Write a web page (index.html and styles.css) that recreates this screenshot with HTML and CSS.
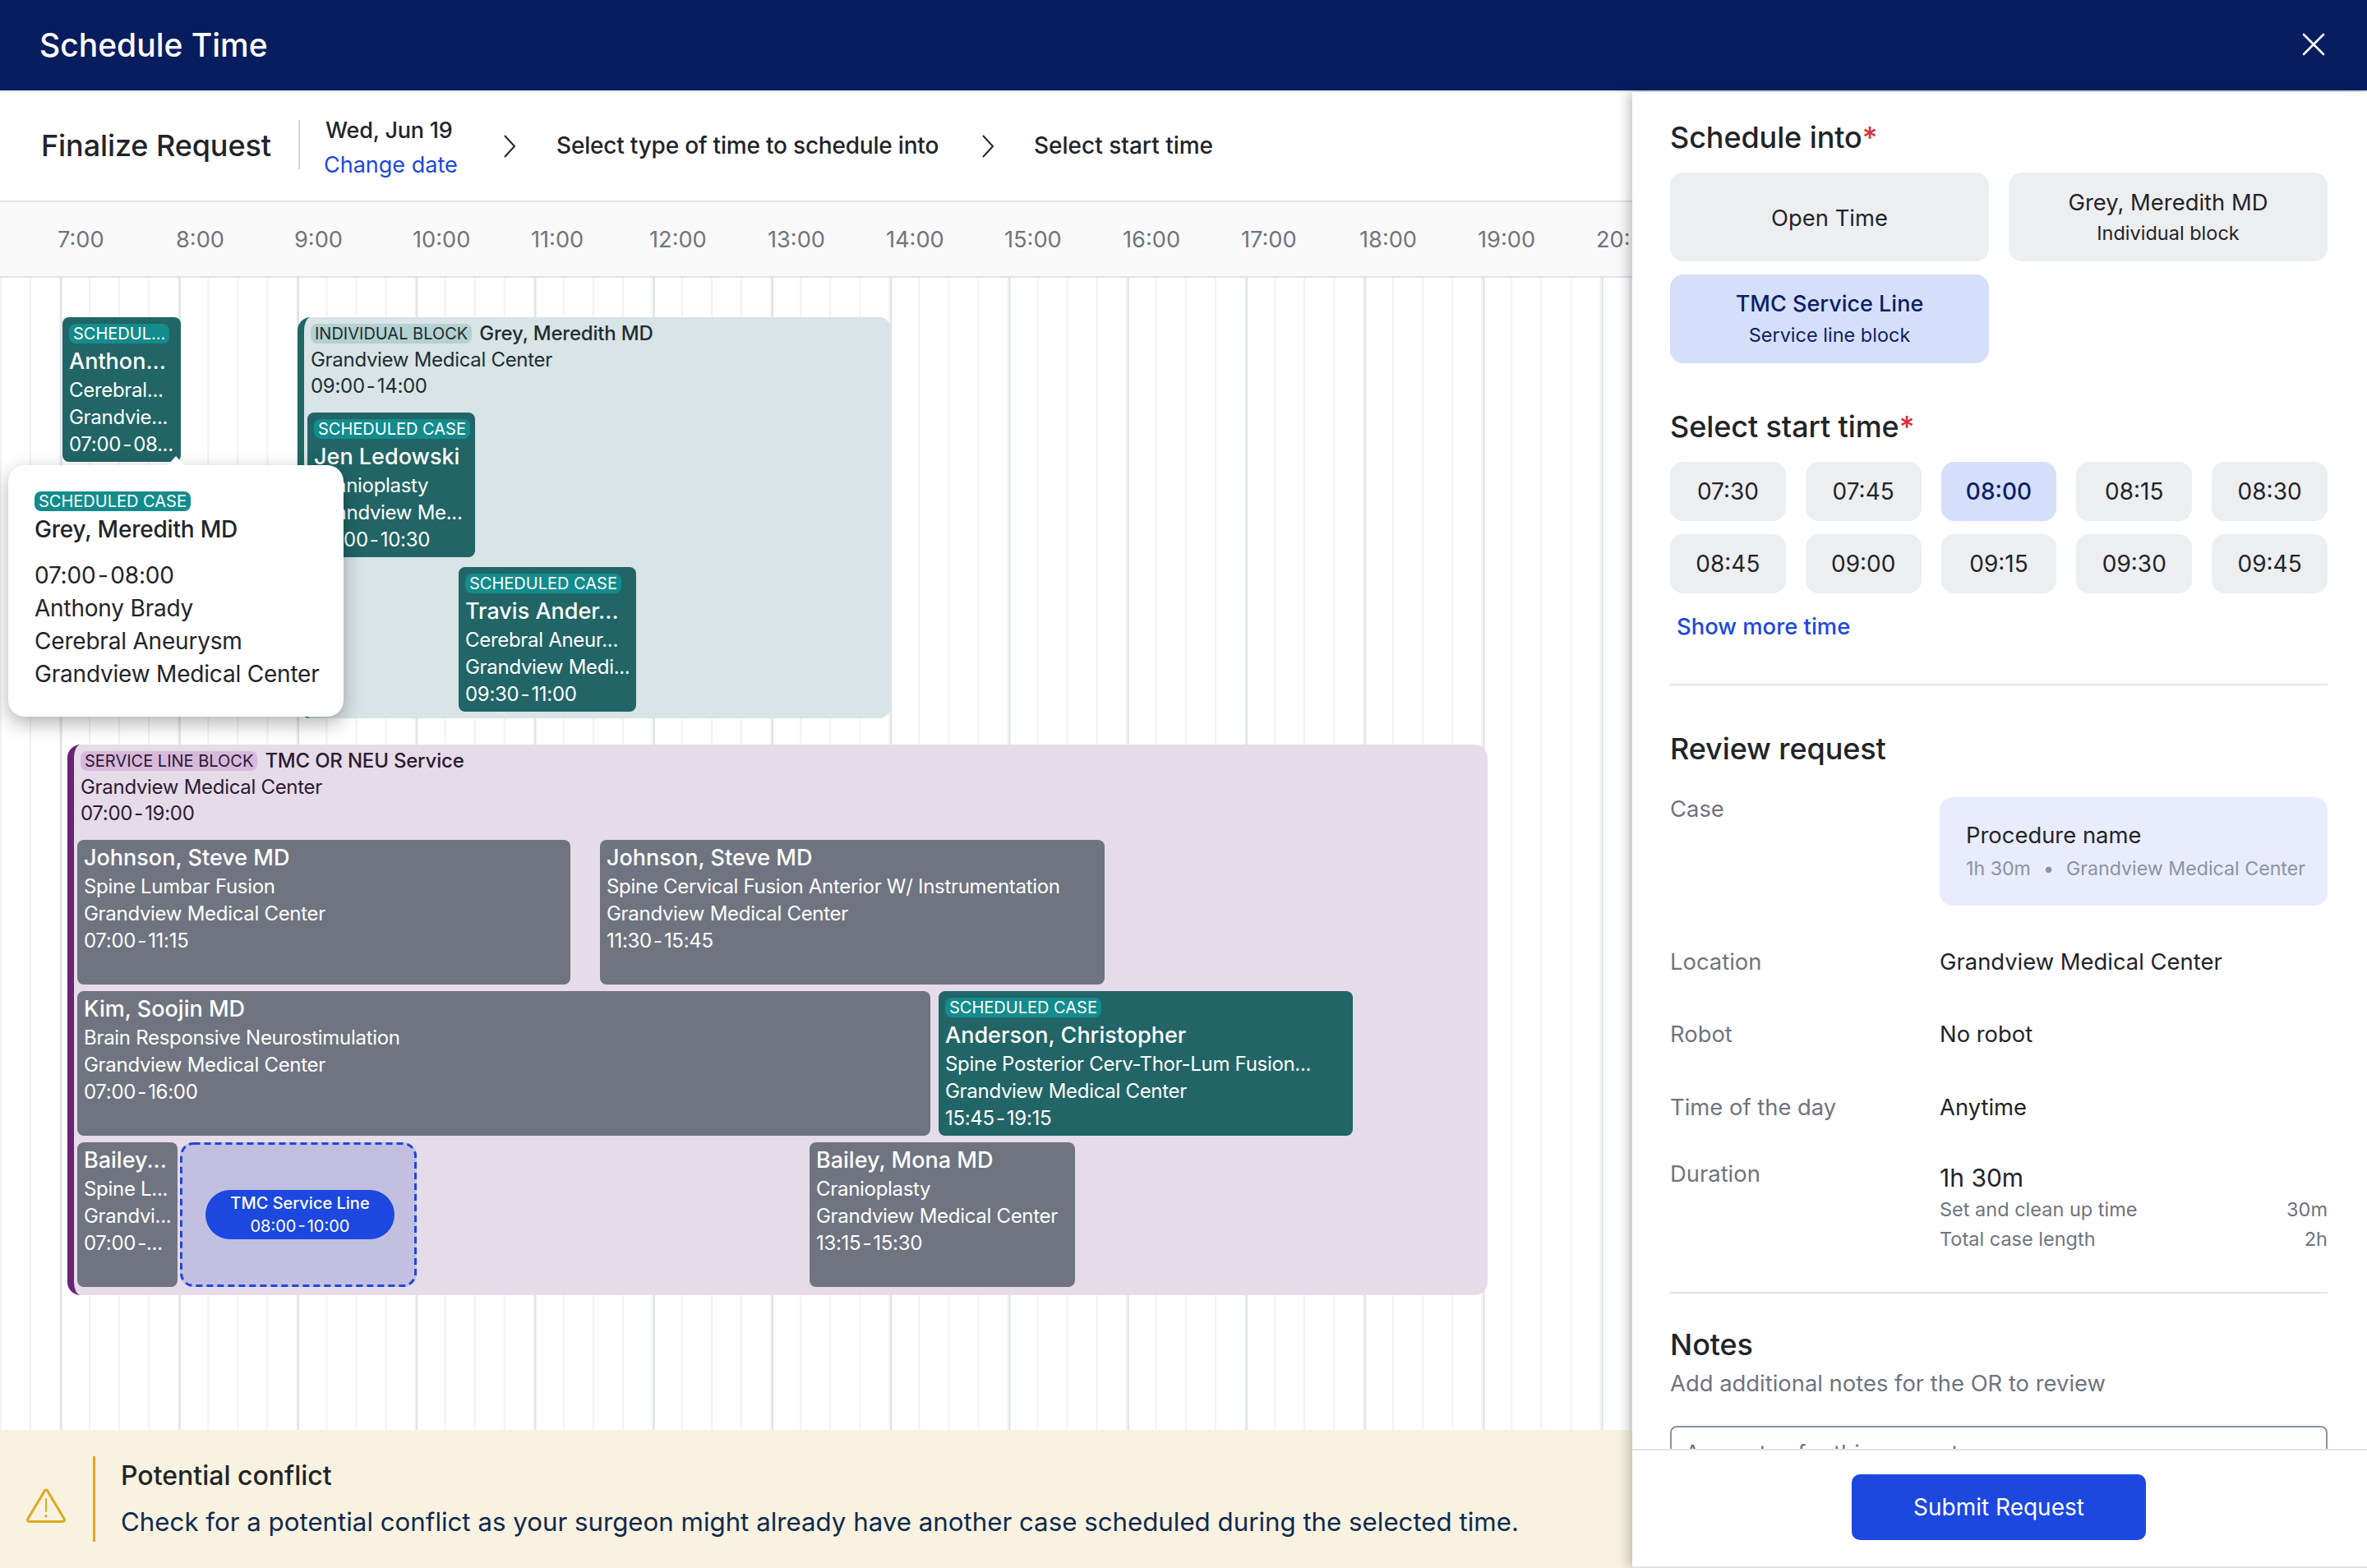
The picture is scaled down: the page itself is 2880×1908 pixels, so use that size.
FILE: index.html
```html
<!DOCTYPE html>
<html lang="en">
<head>
    <meta charset="UTF-8">
    <meta name="viewport" content="width=device-width, initial-scale=1.0">
    <title>Schedule Time</title>
    <link rel="stylesheet" href="styles.css">
</head>
<body>
    <header class="topbar">
        <h1>Schedule Time</h1>
        <svg class="close-icon" viewBox="0 0 28 28" fill="none" stroke="#fff" stroke-width="2.6" stroke-linecap="round">
            <path d="M2 2 L26 26 M26 2 L2 26"/>
        </svg>
    </header>

    <div class="main">
        <section class="board">
            <div class="steps">
                <div class="steps-title">Finalize Request</div>
                <div class="step-date">
                    <div>Wed, Jun 19</div>
                    <a class="link">Change date</a>
                </div>
                <svg class="chevron chevron-first" viewBox="0 0 16 28" fill="none" stroke="#22242a" stroke-width="2">
                    <path d="M2 1 L14 14 L2 27"/>
                </svg>
                <div class="step-label step-label-long">Select type of time to schedule into</div>
                <svg class="chevron chevron-second" viewBox="0 0 16 28" fill="none" stroke="#22242a" stroke-width="2">
                    <path d="M2 1 L14 14 L2 27"/>
                </svg>
                <div class="step-label">Select start time</div>
            </div>

            <div class="hours">
                <span>7:00</span><span>8:00</span><span>9:00</span><span>10:00</span><span>11:00</span>
                <span>12:00</span><span>13:00</span><span>14:00</span><span>15:00</span><span>16:00</span>
                <span>17:00</span><span>18:00</span><span>19:00</span><span>20:</span>
            </div>

            <div class="timeline">
                <!-- scheduled case outside any block -->
                <div class="card card-case card-anthony">
                    <span class="tag tag-case">Schedul...</span>
                    <div class="card-name">Anthon...</div>
                    <div class="card-line">Cerebral...</div>
                    <div class="card-line">Grandvie...</div>
                    <div class="card-line range">07:00 - 08...</div>
                </div>

                <!-- individual block -->
                <div class="block block-individual">
                    <div class="block-head">
                        <span class="tag tag-individual">Individual block</span>
                        <span class="block-name">Grey, Meredith MD</span>
                    </div>
                    <div class="block-line">Grandview Medical Center</div>
                    <div class="block-line range">09:00 - 14:00</div>
                    <div class="block-rows block-rows-tight">
                        <div class="card-row">
                            <div class="card card-case w-jen">
                                <span class="tag tag-case">Scheduled case</span>
                                <div class="card-name">Jen Ledowski</div>
                                <div class="card-line">Cranioplasty</div>
                                <div class="card-line">Grandview Me...</div>
                                <div class="card-line range">09:00 - 10:30</div>
                            </div>
                        </div>
                        <div class="card-row">
                            <div class="card card-case w-travis">
                                <span class="tag tag-case">Scheduled case</span>
                                <div class="card-name">Travis Ander...</div>
                                <div class="card-line">Cerebral Aneur...</div>
                                <div class="card-line">Grandview Medi...</div>
                                <div class="card-line range">09:30 - 11:00</div>
                            </div>
                        </div>
                    </div>
                </div>

                <!-- service line block -->
                <div class="block block-service">
                    <div class="block-head">
                        <span class="tag tag-service">Service line block</span>
                        <span class="block-name">TMC OR NEU Service</span>
                    </div>
                    <div class="block-line">Grandview Medical Center</div>
                    <div class="block-line range">07:00 - 19:00</div>
                    <div class="block-rows">
                        <div class="card-row">
                            <div class="card card-grey w-johnson1">
                                <div class="card-name">Johnson, Steve MD</div>
                                <div class="card-line">Spine Lumbar Fusion</div>
                                <div class="card-line">Grandview Medical Center</div>
                                <div class="card-line range">07:00 - 11:15</div>
                            </div>
                            <div class="card card-grey w-johnson2">
                                <div class="card-name">Johnson, Steve MD</div>
                                <div class="card-line">Spine Cervical Fusion Anterior W/ Instrumentation</div>
                                <div class="card-line">Grandview Medical Center</div>
                                <div class="card-line range">11:30 - 15:45</div>
                            </div>
                        </div>
                        <div class="card-row">
                            <div class="card card-grey w-kim">
                                <div class="card-name">Kim, Soojin MD</div>
                                <div class="card-line">Brain Responsive Neurostimulation</div>
                                <div class="card-line">Grandview Medical Center</div>
                                <div class="card-line range">07:00 - 16:00</div>
                            </div>
                            <div class="card card-case w-anderson">
                                <span class="tag tag-case">Scheduled case</span>
                                <div class="card-name">Anderson, Christopher</div>
                                <div class="card-line">Spine Posterior Cerv-Thor-Lum Fusion...</div>
                                <div class="card-line">Grandview Medical Center</div>
                                <div class="card-line range">15:45 - 19:15</div>
                            </div>
                        </div>
                        <div class="card-row">
                            <div class="card card-grey w-bailey1">
                                <div class="card-name">Bailey...</div>
                                <div class="card-line">Spine L...</div>
                                <div class="card-line">Grandvi...</div>
                                <div class="card-line range">07:00 -...</div>
                            </div>
                            <div class="drop-slot">
                                <svg class="drop-outline" fill="none" stroke="#1c48df" stroke-width="3" stroke-dasharray="8 5">
                                    <rect x="1.500" y="1.500" width="285" height="173" rx="15"/>
                                </svg>
                                <div class="drop-pill">
                                    <strong>TMC Service Line</strong>
                                    <span class="range">08:00 - 10:00</span>
                                </div>
                            </div>
                            <div class="card card-grey w-bailey2">
                                <div class="card-name">Bailey, Mona MD</div>
                                <div class="card-line">Cranioplasty</div>
                                <div class="card-line">Grandview Medical Center</div>
                                <div class="card-line range">13:15 - 15:30</div>
                            </div>
                        </div>
                    </div>
                </div>

                <!-- hover popup for the 07:00 case -->
                <div class="popup">
                    <span class="tag tag-case">Scheduled case</span>
                    <div class="popup-name">Grey, Meredith MD</div>
                    <div class="range">07:00 - 08:00</div>
                    <div>Anthony Brady</div>
                    <div>Cerebral Aneurysm</div>
                    <div>Grandview Medical Center</div>
                </div>
            </div>

            <div class="conflict">
                <svg class="conflict-icon" viewBox="0 0 48 42" fill="none" stroke="#dea71d" stroke-width="3" stroke-linejoin="round" stroke-linecap="round">
                    <path d="M24 2 C25 2 26 3 26.500 4.500 L46 37 C47 39 46 40.500 44 40.500 L4 40.500 C2 40.500 1 39 2 37 L21.500 4.500 C22 3 23 2 24 2 Z"/>
                    <path d="M24 13 L24 28" stroke-width="2"/>
                    <path d="M24 33.500 L24 34"/>
                </svg>
                <div class="conflict-text">
                    <div class="conflict-title">Potential conflict</div>
                    <div class="conflict-body">Check for a potential conflict as your surgeon might already have another case scheduled during the selected time.</div>
                </div>
            </div>
        </section>

        <aside class="panel">
            <div class="panel-body">
                <h2 class="first-heading">Schedule into<span class="req">*</span></h2>
                <div class="choice-grid">
                    <div class="choice"><div class="choice-main">Open Time</div></div>
                    <div class="choice">
                        <div class="choice-main">Grey, Meredith MD</div>
                        <div class="choice-sub">Individual block</div>
                    </div>
                    <div class="choice selected">
                        <div class="choice-main">TMC Service Line</div>
                        <div class="choice-sub">Service line block</div>
                    </div>
                </div>

                <h2 class="start-heading">Select start time<span class="req">*</span></h2>
                <div class="time-grid">
                    <div class="time">07:30</div>
                    <div class="time">07:45</div>
                    <div class="time selected">08:00</div>
                    <div class="time">08:15</div>
                    <div class="time">08:30</div>
                    <div class="time">08:45</div>
                    <div class="time">09:00</div>
                    <div class="time">09:15</div>
                    <div class="time">09:30</div>
                    <div class="time">09:45</div>
                </div>
                <a class="link show-more">Show more time</a>
                <hr class="rule rule-review">

                <h2 class="review-heading">Review request</h2>
                <div class="review-row row-case">
                    <div class="review-label label-top">Case</div>
                    <div class="case-box">
                        <div class="case-name">Procedure name</div>
                        <div class="case-meta"><span>1h 30m</span><span class="dot">•</span><span>Grandview Medical Center</span></div>
                    </div>
                </div>
                <div class="review-row row-location">
                    <div class="review-label">Location</div>
                    <div>Grandview Medical Center</div>
                </div>
                <div class="review-row row-robot">
                    <div class="review-label">Robot</div>
                    <div>No robot</div>
                </div>
                <div class="review-row row-time">
                    <div class="review-label">Time of the day</div>
                    <div>Anytime</div>
                </div>
                <div class="review-row row-duration">
                    <div class="review-label">Duration</div>
                    <div>
                        <div class="duration-value">1h 30m</div>
                        <div class="duration-line"><span>Set and clean up time</span><span>30m</span></div>
                        <div class="duration-line"><span>Total case length</span><span>2h</span></div>
                    </div>
                </div>
                <hr class="rule rule-notes">

                <h2 class="notes-heading">Notes</h2>
                <div class="notes-hint">Add additional notes for the OR to review</div>
                <div class="notes-input">Any notes for this request</div>
            </div>
            <div class="panel-footer">
                <button class="submit">Submit Request</button>
            </div>
        </aside>
    </div>
</body>
</html>
```

FILE: styles.css
```css
* {
    box-sizing: border-box;
}

html, body {
    margin: 0;
    padding: 0;
    height: 100%;
    overflow: hidden;
}

body {
    display: flex;
    flex-direction: column;
    font-family: Inter, "Liberation Sans", sans-serif;
    font-size: 28px;
    color: #22242a;
    background: #fff;
}

h1, h2 {
    margin: 0;
    font-weight: 500;
}

.link {
    color: #1c48df;
}

/* the reference sets time ranges with almost no space round the dash */
.range {
    word-spacing: -0.18em;
}

/* top bar */
.topbar {
    flex: none;
    height: 112px;
    display: flex;
    align-items: center;
    justify-content: space-between;
    padding: 0 51px 2px 48px;
    background: #071d5f;
    border-bottom: 2px solid #e5e7eb;
}

.topbar h1 {
    font-size: 39px;
    color: #fff;
}

.close-icon {
    width: 28px;
    height: 28px;
}

.main {
    flex: 1;
    min-height: 0;
    display: flex;
}

/* left side */
.board {
    flex: 1;
    min-width: 0;
    display: flex;
    flex-direction: column;
    overflow: hidden;
}

.steps {
    flex: none;
    height: 134px;
    display: flex;
    align-items: center;
    padding-left: 50px;
    border-bottom: 2px solid #e2e3e5;
}

.steps-title {
    width: 313px;
    font-size: 36px;
    font-weight: 500;
    letter-spacing: -0.1px;
    margin-top: -2px;
}

.step-date {
    flex: none;
    width: 198px;
    height: 60px;
    padding-left: 31px;
    border-left: 2px solid #d5d7da;
    font-size: 27px;
    font-weight: 500;
    line-height: 42px;
    letter-spacing: -0.2px;
    margin-top: -4px;
}

.step-date > div {
    margin-top: -8px;
}

.step-date .link {
    display: block;
    margin-left: -2px;
    font-weight: 400;
    letter-spacing: 0;
}

.chevron {
    flex: none;
    width: 16px;
    height: 28px;
}

.chevron-first {
    margin: 0 49px 0 51px;
}

.chevron-second {
    margin: 0 48px 0 0;
}

.step-label {
    font-weight: 500;
    margin-top: -2px;
}

.step-label-long {
    flex: none;
    width: 517px;
    letter-spacing: -0.2px;
}

.hours {
    flex: none;
    height: 92px;
    display: flex;
    align-items: center;
    padding-left: 70px;
    background: #f9f9f9;
    border-bottom: 2px solid #e2e3e5;
    color: #6f7480;
    font-size: 27.2px;
}

.hours span {
    flex: none;
    width: 144px;
}

/* timeline canvas, 1h = 144.25px */
.timeline {
    flex: 1;
    min-height: 0;
    position: relative;
    background-image:
        linear-gradient(to right, #dfe0e2 2px, transparent 2px),
        linear-gradient(to right, #f1f2f3 2px, transparent 2px);
    background-size: 144.25px 100%, 36.06px 100%;
    background-position: 73.5px 0, 36px 0;
}

.block {
    position: absolute;
    padding: 8px 0 0 4px;
    border-left: 8px solid;
    border-radius: 16px;
    font-size: 24px;
    line-height: 32px;
}

.block-individual {
    left: 362px;
    top: 48px;
    width: 723px;
    height: 488px;
    background: #d8e4e6;
    border-color: #216567;
    color: #1f2d33;
}

.block-service {
    left: 82px;
    top: 568px;
    width: 1728px;
    height: 670px;
    background: #e6dbe9;
    border-color: #6a2277;
    color: #2b1b33;
}

.block-head {
    display: flex;
    align-items: center;
    gap: 9px;
    height: 24px;
    margin: 0 0 4px 4px;
}

.block-name {
    font-weight: 500;
    letter-spacing: -0.2px;
}

.block-line {
    margin-left: 4px;
    letter-spacing: -0.3px;
}

.block-rows {
    display: flex;
    flex-direction: column;
    gap: 8px;
    margin-top: 16px;
}

.block-rows-tight {
    gap: 12px;
}

.card-row {
    display: flex;
}

.card {
    flex: none;
    height: 176px;
    padding: 4px 6px 4px 8px;
    border-radius: 8px;
    color: #fff;
    font-size: 24px;
}

.card-case {
    padding-top: 8px;
    background: #216567;
}

.card-grey {
    background: #6f7480;
}

.card-anthony {
    position: absolute;
    left: 76px;
    top: 48px;
    width: 144px;
}

.card-name {
    margin-top: 4px;
    font-size: 27px;
    font-weight: 500;
    line-height: 36px;
    white-space: nowrap;
}

.card-grey .card-name {
    margin-top: 0;
}

.card-line {
    line-height: 33px;
    letter-spacing: -0.3px;
    white-space: nowrap;
}

.w-jen { width: 204px; }
.w-travis { width: 216px; margin-left: 184px; }
.w-johnson1 { width: 600px; }
.w-johnson2 { width: 614px; margin-left: 36px; }
.w-kim { width: 1038px; }
.w-anderson { width: 504px; margin-left: 10px; }
.w-bailey1 { width: 122px; }
.w-bailey2 { width: 323px; margin-left: 478px; }

.tag {
    display: block;
    width: fit-content;
    height: 24px;
    padding: 0 5px;
    border-radius: 8px;
    font-size: 20px;
    line-height: 24px;
    letter-spacing: 0;
    text-transform: uppercase;
    white-space: nowrap;
}

.tag-case {
    background: #128c8c;
    color: #fff;
}

.tag-individual {
    background: #b4d0d0;
}

.tag-service {
    background: #d8b9dc;
}

.drop-slot {
    flex: none;
    position: relative;
    width: 288px;
    height: 176px;
    margin-left: 3px;
    padding-left: 4px;
    display: flex;
    align-items: center;
    justify-content: center;
    background: #c3bfe0;
    border-radius: 16px;
}

.drop-outline {
    position: absolute;
    inset: 0;
    width: 100%;
    height: 100%;
}

.drop-pill {
    width: 230px;
    height: 60px;
    display: flex;
    flex-direction: column;
    align-items: center;
    justify-content: center;
    background: #1c48df;
    border-radius: 30px;
    color: #fff;
    font-size: 20px;
    line-height: 28px;
}

.drop-pill strong {
    font-weight: 500;
}

.popup {
    position: absolute;
    left: 10px;
    top: 228px;
    width: 408px;
    height: 306px;
    padding: 32px 0 0 32px;
    background: #fff;
    border-radius: 20px;
    box-shadow: 0 8px 24px rgba(0, 0, 0, 0.3);
    font-size: 28px;
    letter-spacing: -0.2px;
    line-height: 40px;
    white-space: nowrap;
}

.popup::before {
    content: "";
    position: absolute;
    left: 194px;
    top: -11px;
    border-left: 10px solid transparent;
    border-right: 10px solid transparent;
    border-bottom: 11px solid #fff;
}

.popup-name {
    margin: 2px 0 16px;
    font-size: 28px;
    font-weight: 500;
    line-height: 40px;
}

.conflict {
    flex: none;
    height: 168px;
    display: flex;
    align-items: center;
    background: #f9f2e0;
}

.conflict-icon {
    flex: none;
    width: 48px;
    height: 42px;
    margin: 0 33px 0 32px;
    position: relative;
    top: 8px;
}

.conflict-text {
    height: 104px;
    padding-left: 31px;
    border-left: 3px solid #dea71d;
}

.conflict-title {
    font-size: 32px;
    font-weight: 500;
    line-height: 48px;
}

.conflict-body {
    margin-top: 10px;
    font-size: 31.25px;
    line-height: 44px;
    color: #0f2a4f;
    white-space: nowrap;
}

/* right panel */
.panel {
    flex: none;
    width: 894px;
    display: flex;
    flex-direction: column;
    background: #fff;
    box-shadow: -4px 0 14px rgba(0, 0, 0, 0.25);
    z-index: 2;
}

.panel-body {
    flex: 1;
    min-height: 0;
    padding: 33px 48px 0 46px;
    font-size: 27.4px;
    overflow: hidden;
}

.panel h2 {
    font-size: 36px;
    line-height: 44px;
    letter-spacing: -0.1px;
}

.req {
    color: #d92d3a;
}

.choice-grid {
    display: grid;
    grid-template-columns: 388px 388px;
    gap: 16px 24px;
    margin-top: 21px;
}

.choice {
    height: 108px;
    padding-top: 1px;
    display: flex;
    flex-direction: column;
    align-items: center;
    justify-content: center;
    background: #edeef0;
    border-radius: 16px;
}

.choice-main {
    line-height: 38px;
}

.choice-sub {
    font-size: 23.5px;
    line-height: 38px;
}

.choice.selected {
    background: #d6dffa;
    color: #0b1f66;
}

.choice.selected .choice-main {
    font-weight: 500;
    font-size: 27px;
}

.start-heading {
    margin-top: 55px;
}

.time-grid {
    display: grid;
    grid-template-columns: repeat(5, 1fr);
    gap: 16px 24px;
    margin-top: 21px;
}

.time {
    height: 72px;
    display: flex;
    align-items: center;
    justify-content: center;
    background: #edeef0;
    border-radius: 16px;
    font-size: 28px;
}

.time.selected {
    background: #d6dffa;
    color: #0b1f66;
    font-weight: 500;
}

.show-more {
    display: block;
    margin: 20px 0 0 8px;
    font-weight: 500;
    line-height: 40px;
}

.rule {
    height: 2px;
    margin: 0;
    border: 0;
    background: #e2e3e5;
}

.rule-review {
    margin-top: 50px;
}

.review-heading {
    margin-top: 55px;
}

.review-row {
    display: grid;
    grid-template-columns: 328px 472px;
    line-height: 36px;
}

.review-label {
    color: #6f7480;
}

.label-top {
    line-height: 28px;
}

.row-case { margin-top: 37px; }
.row-location { margin-top: 50px; }
.row-robot { margin-top: 52px; }
.row-time { margin-top: 53px; }
.row-duration { margin-top: 45px; }

.case-box {
    height: 132px;
    padding: 28px 14px 0 32px;
    background: #e9ecfc;
    border-radius: 16px;
}

.case-meta {
    display: flex;
    gap: 15px;
    margin-top: 5px;
    font-size: 23.2px;
    color: #8b93a1;
    white-space: nowrap;
}

.duration-value {
    margin: 5px 0 3px;
    font-size: 30px;
}

.duration-line {
    display: flex;
    justify-content: space-between;
    font-size: 23.5px;
    color: #6f7480;
}

.rule-notes {
    margin-top: 46px;
}

.notes-heading {
    margin-top: 40px;
}

.notes-hint {
    margin-top: 7px;
    line-height: 36px;
    color: #6f7480;
}

.notes-input {
    height: 120px;
    margin-top: 34px;
    padding: 14px 16px;
    border: 2px solid #8b93a1;
    border-radius: 8px;
    color: #6f7480;
}

.panel-footer {
    flex: none;
    height: 145px;
    display: flex;
    justify-content: center;
    padding: 29px 2px 0 0;
    border-top: 2px solid #e2e3e5;
    border-bottom: 2px solid #e2e3e5;
}

.submit {
    width: 358px;
    height: 80px;
    border: 0;
    border-radius: 10px;
    background: #1c48df;
    color: #fff;
    font-family: inherit;
    font-size: 28px;
}
```
